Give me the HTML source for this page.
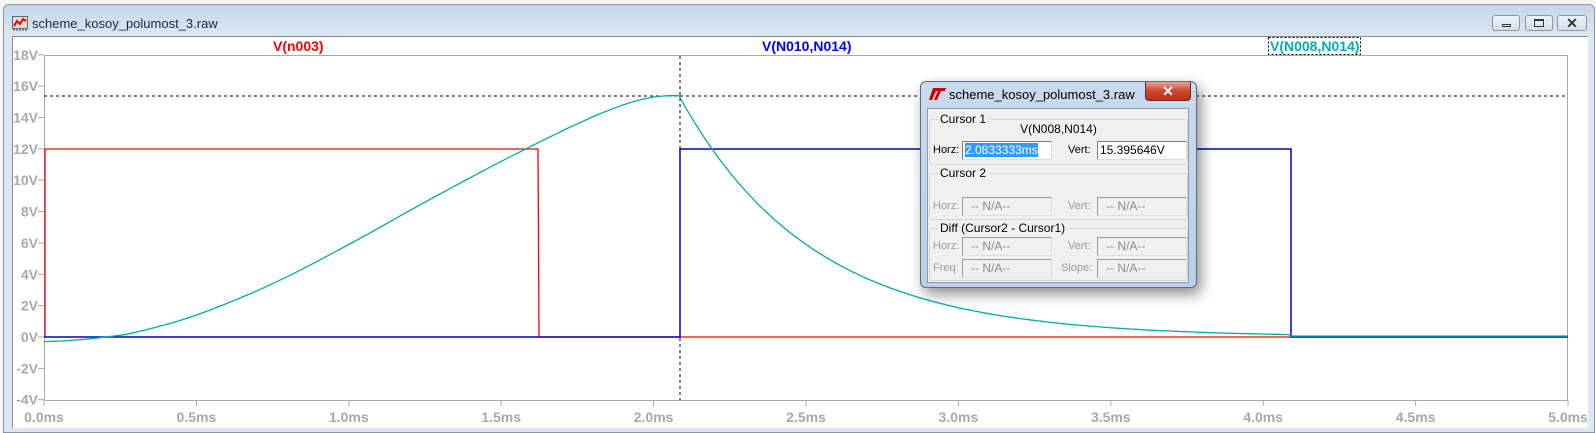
<!DOCTYPE html>
<html><head><meta charset="utf-8"><style>
body{margin:0;width:1596px;height:433px;overflow:hidden;background:#f4f4f4;position:relative;font-family:"Liberation Sans",sans-serif}
.abs{position:absolute}
.win{left:3px;top:4px;width:1592px;height:429px;background:linear-gradient(#c6d6e8,#dbe6f2 30px,#dbe6f2);border:1px solid #8a96a4;border-radius:6px 6px 0 0;box-sizing:border-box}
.wb{top:15px;width:28px;height:16px;border:1px solid #8696ab;border-radius:3px;background:linear-gradient(#eef3f9,#d3dfec);box-sizing:border-box}
.dlg{left:920px;top:81px;width:277px;height:207px;background:linear-gradient(#c9daee,#b9d0ea);border:1px solid #5d6b7c;border-radius:6px;box-sizing:border-box;box-shadow:4px 6px 14px rgba(0,0,0,.45)}
.pan{left:6px;top:26px;width:262px;height:175px;background:#f0f0f0;border:1px solid #8e9aa8;box-sizing:border-box}
.grp{position:absolute;left:1px;width:259px;border:1px solid #d6d6d6;border-radius:3px;box-sizing:border-box}
.gt{position:absolute;top:-8px;left:8px;background:#f0f0f0;padding:0 2px;font-size:12px;color:#000}
.lb{position:absolute;font-size:11px;color:#000}
.dis{color:#9c9c9c}
.fld{position:absolute;width:90px;height:19px;border:1px solid #7a7a7a;border-right-color:#dcdcdc;border-bottom-color:#dcdcdc;box-sizing:border-box;font-size:12px;line-height:17px;padding-left:2px;background:#fff}
.fd{background:#f0f0f0;color:#8c8c8c;padding-left:8px;border-color:#9a9a9a #e0e0e0 #e0e0e0 #9a9a9a}
</style></head><body>
<div class="abs win"></div>
<svg class="abs" style="left:12px;top:16px" width="17" height="15"><rect x="0.5" y="0.5" width="15" height="12" fill="#ddd" stroke="#666"/><polyline points="2,10 5,5 8,8 11,3 14,5" fill="none" stroke="#e00" stroke-width="2"/><path d="M2 13v2M5 13v2M8 13v2M11 13v2M14 13v2" stroke="#333"/></svg>
<div class="abs" style="left:32px;top:16px;font-size:13px;color:#1a2a3a">scheme_kosoy_polumost_3.raw</div>
<div class="abs wb" style="left:1492px"><div class="abs" style="left:9px;top:8px;width:9px;height:3px;border:1px solid #333;box-sizing:border-box"></div></div>
<div class="abs wb" style="left:1525px"><div class="abs" style="left:8px;top:3px;width:10px;height:8px;border:1px solid #333;border-top-width:2px;box-sizing:border-box"></div></div>
<div class="abs wb" style="left:1557px;width:30px;font-size:14px;font-weight:bold;color:#333;text-align:center;line-height:14px">✕</div>
<div class="abs" style="left:12px;top:36px;width:1575px;height:391px;background:#fff;border-top:1px solid #8a8a8a;border-left:1px solid #8a8a8a"></div>
<svg class="abs" style="left:0;top:0" width="1596" height="433" id="s">
<g font-family="Liberation Sans" font-weight="bold" font-size="14">
<text x="273" y="51" fill="#f00">V(n003)</text>
<text x="762" y="51" fill="#00f">V(N010,N014)</text>
<text x="1270" y="51" fill="#00b0b0">V(N008,N014)</text>
</g>
<rect x="1268.5" y="37.5" width="92" height="17" fill="none" stroke="#000" stroke-dasharray="2,2"/>
<rect x="44.5" y="55.5" width="1523" height="345" fill="none" stroke="#a8a8a8"/>
<g id="ax" font-family="Liberation Sans" font-weight="bold" font-size="14" fill="#a8a8a8"></g>
<line x1="44" y1="96" x2="1568" y2="96" stroke="#000" stroke-dasharray="3,3"/>
<line x1="680" y1="56" x2="680" y2="400" stroke="#000" stroke-dasharray="3,3"/>
<path d="M45 337V149H538L539 337H1291" fill="none" stroke="#f00" stroke-width="1.3"/>
<path d="M44 337H680V149H1291V337H1568" fill="none" stroke="#00c" stroke-width="1.5"/>
<path id="cy" fill="none" stroke="#00aaaa" stroke-width="1.3"/>
</svg>
<div class="abs dlg">
<svg class="abs" style="left:8px;top:5px" width="18" height="14"><path d="M4 1h13l-1 3h-4l-4 9h-3l4-9h-2l-4 9H0z" fill="#c00"/></svg>
<div class="abs" style="left:28px;top:5px;font-size:13px;color:#000">scheme_kosoy_polumost_3.raw</div>
<div class="abs" style="left:224px;top:0;width:46px;height:19px;border:1px solid #6d2a22;border-top:none;border-radius:0 0 4px 4px;background:linear-gradient(#e9a594,#c9452f 50%,#b8321e);color:#fff;font-weight:bold;font-size:14px;text-align:center;line-height:18px;box-sizing:border-box">✕</div>
<div class="abs pan">
 <div class="grp" style="top:10px;height:46px"><span class="gt">Cursor 1</span>
  <div class="lb" style="left:0;width:257px;text-align:center;top:2px;font-size:12px">V(N008,N014)</div>
  <div class="lb" style="left:3px;top:24px">Horz:</div>
  <div class="fld" style="left:32px;top:21px"><span style="background:#3399ff;color:#fff">2.0833333ms</span></div>
  <div class="lb" style="left:138px;top:24px">Vert:</div>
  <div class="fld" style="left:167px;top:21px">15.395646V</div>
 </div>
 <div class="grp" style="top:64px;height:47px"><span class="gt">Cursor 2</span>
  <div class="lb dis" style="left:3px;top:26px">Horz:</div>
  <div class="fld fd" style="left:32px;top:23px">-- N/A--</div>
  <div class="lb dis" style="left:138px;top:26px">Vert:</div>
  <div class="fld fd" style="left:167px;top:23px">-- N/A--</div>
 </div>
 <div class="grp" style="top:119px;height:53px"><span class="gt">Diff (Cursor2 - Cursor1)</span>
  <div class="lb dis" style="left:3px;top:11px">Horz:</div>
  <div class="fld fd" style="left:32px;top:8px">-- N/A--</div>
  <div class="lb dis" style="left:138px;top:11px">Vert:</div>
  <div class="fld fd" style="left:167px;top:8px">-- N/A--</div>
  <div class="lb dis" style="left:3px;top:33px">Freq:</div>
  <div class="fld fd" style="left:32px;top:30px">-- N/A--</div>
  <div class="lb dis" style="left:131px;top:33px">Slope:</div>
  <div class="fld fd" style="left:167px;top:30px">-- N/A--</div>
 </div>
</div>
</div>
<script>
var ax=document.getElementById("ax"),h="";
for(var v=18;v>=-4;v-=2){var y=337-15.68*v;h+='<text x="38" y="'+(y+5)+'" text-anchor="end">'+v+'V</text><line x1="38" y1="'+y+'" x2="44" y2="'+y+'" stroke="#a8a8a8"/>';}
for(var i=0;i<=10;i++){var x=44+i*152.4;h+='<text x="'+x+'" y="422" text-anchor="middle">'+(i*0.5).toFixed(1)+'ms</text><line x1="'+x+'" y1="400" x2="'+x+'" y2="406" stroke="#a8a8a8"/>';}
ax.innerHTML=h;
var P=[[0,-0.3],[0.1,-0.2],[0.2,0],[0.3,0.3],[0.5,1.4],[0.75,3.4],[1,5.9],[1.25,8.6],[1.5,11.2],[1.75,13.6],[1.9,14.8],[2,15.3],[2.083,15.4]];
function X(t){return 44+t*304.8}function Y(v){return 337-15.68*v}
var d="M"+X(0)+" "+Y(-0.3);
for(var k=0;k<P.length-1;k++){var p0=P[Math.max(0,k-1)],p1=P[k],p2=P[k+1],p3=P[Math.min(P.length-1,k+2)];
for(var s=1;s<=10;s++){var u=s/10,u2=u*u,u3=u2*u;function cr(a,b,c,e){return 0.5*(2*b+(-a+c)*u+(2*a-5*b+4*c-e)*u2+(-a+3*b-3*c+e)*u3)}
d+="L"+X(cr(p0[0],p1[0],p2[0],p3[0])).toFixed(1)+" "+Y(cr(p0[1],p1[1],p2[1],p3[1])).toFixed(1);}}
for(var t=2.083;t<=4.09;t+=0.01){d+="L"+X(t).toFixed(1)+" "+Y(15.4*Math.exp(-(t-2.083)/0.435)).toFixed(1);}
d+="L"+X(4.09)+" "+Y(0.06)+"L1568 "+Y(0.06);
document.getElementById("cy").setAttribute("d",d);
</script>
</body></html>
